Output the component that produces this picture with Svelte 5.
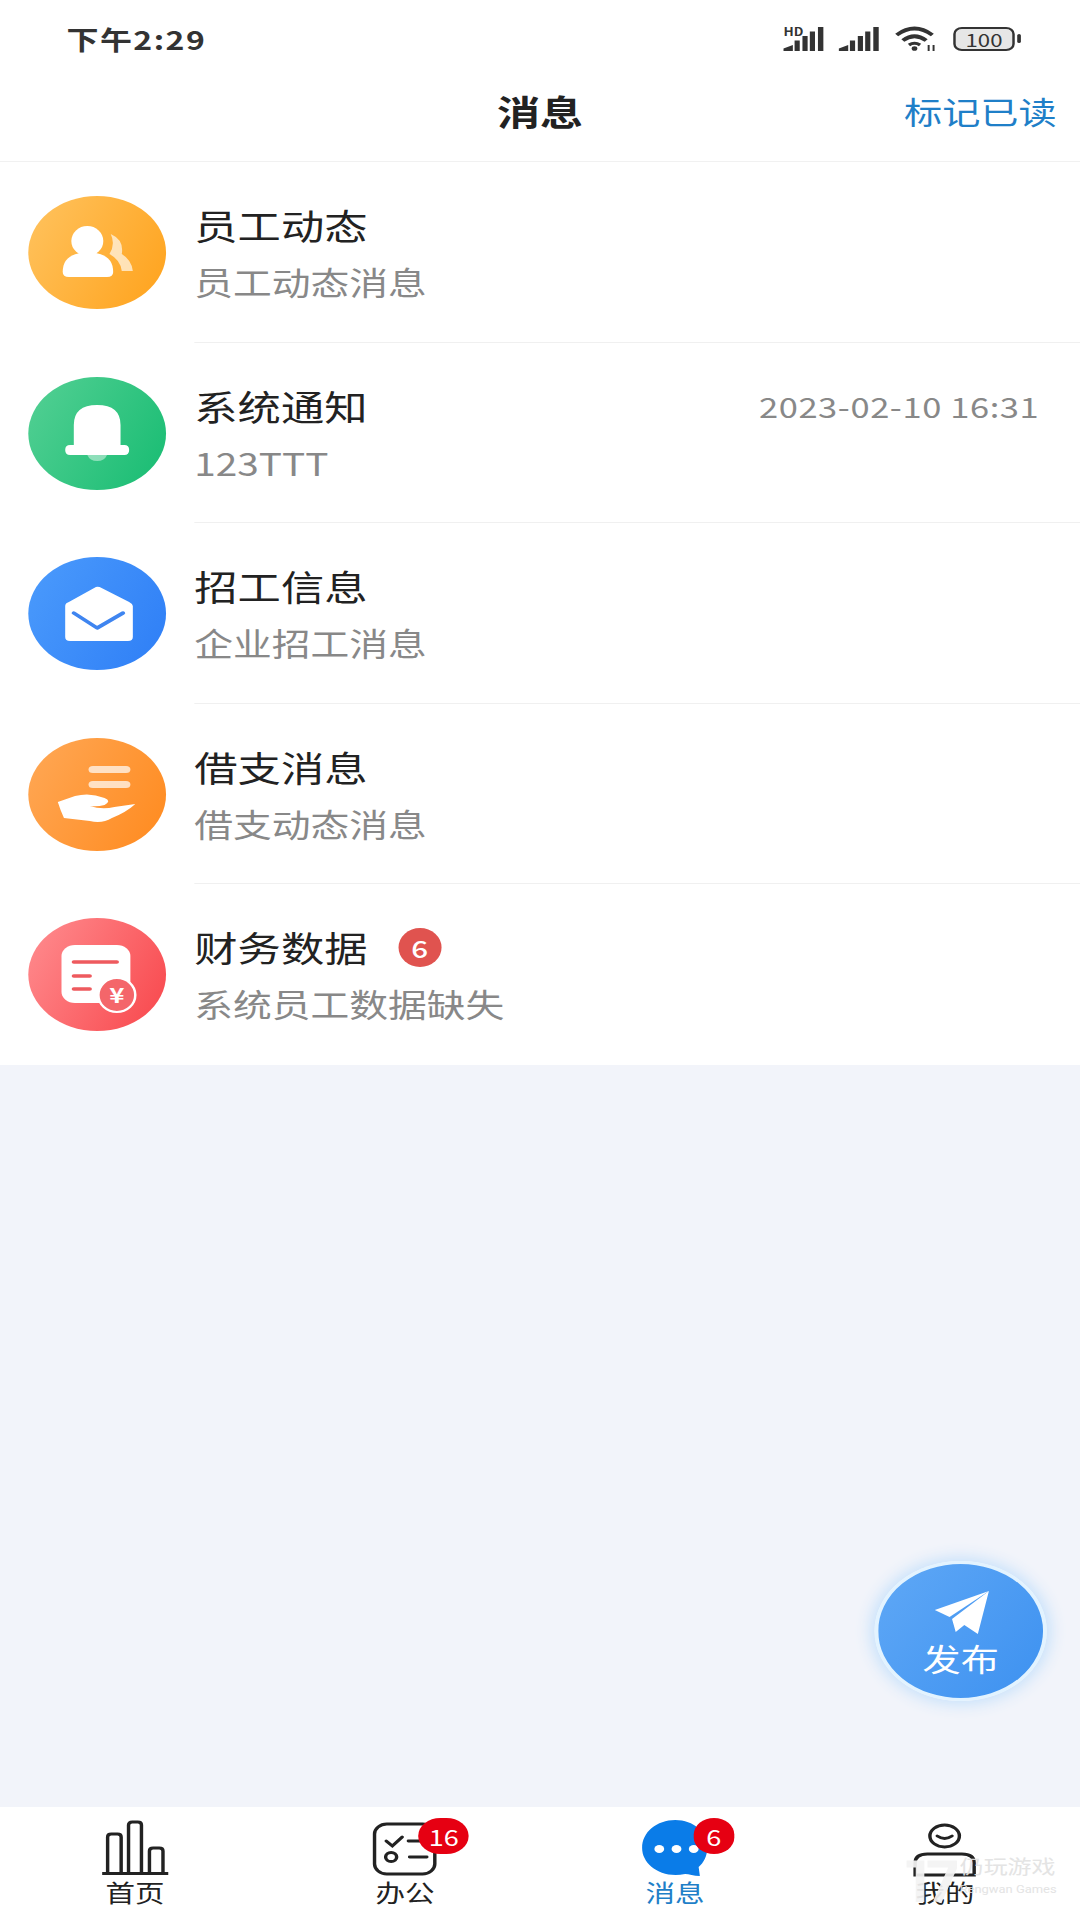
<script>
  const rows = [
    { icon: 'people', title: '员工动态', sub: '员工动态消息' },
    { icon: 'bell', title: '系统通知', sub: '123TTT', time: '2023-02-10 16:31' },
    { icon: 'mail', title: '招工信息', sub: '企业招工消息' },
    { icon: 'hand', title: '借支消息', sub: '借支动态消息' },
    { icon: 'money', title: '财务数据', sub: '系统员工数据缺失', badge: 6 }
  ];
</script>

<div class="page">
  <div class="status">
    <span class="clock">下午2:29</span>
    <div class="status-icons">
      <svg class="sig1" viewBox="0 0 34 24">
        <text x="0" y="9" class="hd">HD</text>
        <path d="M0 24v-2.500l7.600-3.500v6zM9 24v-10.500h4.200v10.500zM15.400 24v-15h4.200v15zM21.400 24v-19.500h4.200v19.500zM28 24v-24h4.400v24z" fill="#333" />
      </svg>
      <svg class="sig2" viewBox="0 0 33 24">
        <path d="M0 24v-2.500l7.600-3.500v6zM9 24v-10.500h4.200v10.500zM15.400 24v-15h4.200v15zM21.400 24v-19.500h4.200v19.500zM28 24v-24h4.400v24z" fill="#333" />
      </svg>
      <svg class="wifi" viewBox="0 0 36 25" fill="none" stroke="#333" stroke-width="3.600">
        <path d="M1 9Q15.500 -4 30 9" />
        <path d="M6 14.500Q15.500 6 25 14.500" />
        <path d="M11 19Q15.500 15.500 20 19" stroke-width="3" />
        <circle cx="15.500" cy="22.500" r="2.300" fill="#333" stroke="none" />
        <path d="M27 19v6M31 19v6" stroke-width="1.600" />
      </svg>
      <div class="battery"><span>100</span></div>
      <div class="nub"></div>
    </div>
  </div>

  <header class="nav">
    <h1>消息</h1>
    <a class="mark" href="#read">标记已读</a>
  </header>

  <ul class="list">
    {#each rows as row}
      <li class="row">
        <div class="avatar {row.icon}">
          <svg viewBox="0 0 112 113">
            {#if row.icon === 'people'}
              <path d="M67 38Q78 44 76 58Q84 64 85 75H76Q75 64 66 58Q71 48 67 38Z" fill="#fff" opacity=".65" />
              <ellipse cx="48" cy="45" rx="13" ry="15" fill="#fff" />
              <path d="M28 76Q28 60 42 57H55Q69 60 69 76Q69 81 64 81H33Q28 81 28 76Z" fill="#fff" />
            {:else if row.icon === 'bell'}
              <path d="M37 68V48Q37 28 56 28Q75 28 75 48V68H78Q82 68 82 73Q82 78 78 78H34Q30 78 30 73Q30 68 34 68Z" fill="#fff" />
              <path d="M48 78H64Q62 84 56 84Q50 84 48 78Z" fill="#fff" opacity=".45" />
            {:else if row.icon === 'mail'}
              <path d="M30 49Q30 46 33 45L55 30Q56 29.500 58 30L82 45Q85 47 85 49V80Q85 84 81 84H34Q30 84 30 80Z" fill="#fff" />
              <path d="M37 56L56 71L77 56" fill="none" stroke="#3f85f0" stroke-width="3.500" stroke-linecap="round" stroke-linejoin="round" />
            {:else if row.icon === 'hand'}
              <rect x="49" y="28" width="34" height="7" rx="3.500" fill="#fff" opacity=".7" />
              <rect x="49" y="43" width="34" height="7" rx="3.500" fill="#fff" opacity=".7" />
              <path d="M24 64L38 58Q50 54 62 60Q68 63 62 67Q56 69 50 68Q60 72 70 69L87 66Q80 74 68 80Q60 86 50 83L29 80Q26 72 24 64Z" fill="#fff" />
            {:else}
              <rect x="27" y="27" width="56" height="58" rx="11" fill="#fff" />
              <path d="M37 44H72M37 58H50M37 71H50" stroke="#ee5a5e" stroke-width="3.500" stroke-linecap="round" />
              <ellipse cx="72" cy="77" rx="15" ry="17" fill="#f4666a" stroke="#fff" stroke-width="2" />
              <text x="72" y="85" class="yen">¥</text>
            {/if}
          </svg>
        </div>
        <div class="body">
          <div class="line">
            <span class="title">{row.title}</span>
            {#if row.badge}<span class="count">{row.badge}</span>{/if}
            {#if row.time}<span class="time">{row.time}</span>{/if}
          </div>
          <p class="sub">{row.sub}</p>
        </div>
      </li>
    {/each}
  </ul>

  <main class="empty">
    <button class="fab">
      <svg viewBox="0 0 138 70">
        <path d="M92 27L48 46L60 53Z" fill="#fff" />
        <path d="M92 27L62 55L65 68L72 61L83 70Z" fill="#fff" />
      </svg>
      <span>发布</span>
    </button>
  </main>

  <nav class="tabs">
    <div class="tab">
      <div class="tab-icon">
        <svg viewBox="0 0 54 57" fill="none" stroke="#222" stroke-width="2.800">
          <path d="M0 53.500H54" stroke-width="3" />
          <path d="M4.500 53V17Q4.500 14 7.500 14H12.500Q15.500 14 15.500 17V53" />
          <path d="M21.500 53V5Q21.500 2 24.500 2H29Q32 2 32 5V53" />
          <path d="M38.500 53V31Q38.500 28 41.500 28H46.500Q49.500 28 49.500 31V53" />
        </svg>
      </div>
      <span>首页</span>
    </div>
    <div class="tab">
      <div class="tab-icon">
        <svg viewBox="0 0 52 57" fill="none" stroke="#222" stroke-width="2.800">
          <rect x="1.500" y="4" width="49" height="50" rx="10" />
          <path d="M11 21L16 26L24 17M29 21H42M30 37H44" stroke-linecap="round" />
          <circle cx="15" cy="37" r="4.500" />
        </svg>
        <span class="pill office">16</span>
      </div>
      <span>办公</span>
    </div>
    <div class="tab active">
      <div class="tab-icon">
        <svg viewBox="0 0 54 57">
          <path d="M27 0C42 0 53 12 53 28C53 36 50 43 46 47L47 56C42 56 38 54 35 54C15 59 0 44 0 28C0 12 12 0 27 0Z" fill="#0a7ce8" />
          <circle cx="14" cy="29" r="4" fill="#fff" />
          <circle cx="28" cy="29" r="4" fill="#fff" />
          <circle cx="42" cy="29" r="4" fill="#fff" />
        </svg>
        <span class="pill chat">6</span>
      </div>
      <span>消息</span>
    </div>
    <div class="tab">
      <div class="tab-icon">
        <svg viewBox="0 0 52 57" fill="none" stroke="#222" stroke-width="2.800">
          <ellipse cx="26" cy="16" rx="12" ry="11" />
          <path d="M20 16Q26 21 32 16" stroke-linecap="round" />
          <path d="M2 55V43Q2 34 12 34H40Q50 34 50 43V55Z" />
        </svg>
      </div>
      <span>我的</span>
    </div>
    <div class="watermark">
      <svg viewBox="0 0 44 50" fill="none" stroke="#f4f4f4" stroke-width="7">
        <path d="M3 10H14V48M20 10H42L28 48" />
      </svg>
      <div class="wm-text">
        <strong>仍玩游戏</strong>
        <small>Rengwan Games</small>
      </div>
    </div>
  </nav>
</div>

<style>
  :global(body) {
    margin: 0;
    overflow: hidden;
    background: #f2f4fa;
    font-family: "Noto Sans CJK SC", "Noto Sans", sans-serif;
  }

  /* the whole screen is stretched sideways in the source, 878 -> 1080 */
  .page {
    width: 878px;
    height: 1920px;
    display: flex;
    flex-direction: column;
    background: #f2f4fa;
    transform: scaleX(1.23);
    transform-origin: 0 0;
    position: relative;
    overflow: hidden;
  }

  .status {
    height: 64px;
    background: #fff;
    display: flex;
    justify-content: space-between;
    align-items: center;
    padding: 13px 48px 0 54px;
    box-sizing: border-box;
    flex-shrink: 0;
  }
  .clock {
    font-size: 26px;
    font-weight: 700;
    color: #333;
    line-height: 1;
    letter-spacing: 1.200px;
  }
  .status-icons {
    display: flex;
    align-items: center;
    height: 25px;
  }
  .status-icons svg { overflow: visible; }
  .sig1 { width: 34px; height: 24px; margin-right: 11px; }
  .sig2 { width: 33px; height: 24px; margin-right: 13px; }
  .wifi { width: 36px; height: 25px; margin-right: 11px; }
  .hd { font-size: 11px; font-weight: 700; fill: #333; }
  .battery {
    width: 50px;
    height: 24px;
    box-sizing: border-box;
    border: 2.500px solid #333;
    border-radius: 7px;
    background: #e6e6e6;
    display: flex;
    align-items: center;
    justify-content: center;
    font-size: 18px;
    color: #333;
    line-height: 1;
  }
  .nub {
    width: 3px;
    height: 9px;
    margin-left: 2px;
    border-radius: 2px;
    background: #333;
  }

  .nav {
    height: 98px;
    background: #fff;
    border-bottom: 1px solid #f1f1f1;
    display: flex;
    align-items: center;
    justify-content: center;
    position: relative;
    flex-shrink: 0;
    box-sizing: border-box;
    padding-bottom: 4px;
  }
  h1 {
    margin: 0;
    font-size: 35px;
    font-weight: 700;
    color: #222;
    line-height: 1;
  }
  .mark {
    position: absolute;
    right: 19px;
    top: 31px;
    font-size: 31px;
    color: #1f7fc8;
    line-height: 1;
    text-decoration: none;
  }

  .list {
    margin: 0;
    padding: 0;
    list-style: none;
    background: #fff;
    flex-shrink: 0;
  }
  .row {
    height: 180.500px;
    display: flex;
    align-items: center;
    padding-left: 23px;
  }
  .avatar {
    width: 112px;
    height: 113px;
    border-radius: 50%;
    flex-shrink: 0;
    margin-right: 23px;
    margin-top: 1px;
  }
  .avatar svg { display: block; width: 100%; height: 100%; }
  .people { background: linear-gradient(115deg, #ffc35f, #ffa21b); }
  .bell { background: linear-gradient(115deg, #54d094, #17bc72); }
  .mail { background: linear-gradient(115deg, #4b9bfc, #2e7ef6); }
  .hand { background: linear-gradient(115deg, #ffa856, #ff8a1e); }
  .money { background: linear-gradient(115deg, #ff8d90, #f8464b); }
  .yen { font-size: 21px; font-weight: 700; fill: #fff; text-anchor: middle; }

  .body {
    flex: 1;
    height: 100%;
    box-sizing: border-box;
    border-bottom: 1px solid #f0f0f0;
    padding-top: 45px;
  }
  .row:last-child .body { border-bottom: none; }
  .line {
    display: flex;
    align-items: center;
    height: 36px;
    padding-right: 27px;
  }
  .title {
    font-size: 35.200px;
    color: #222;
    line-height: 36px;
  }
  .count {
    width: 35px;
    height: 39px;
    margin-left: 25px;
    border-radius: 50%;
    background: #e0534f;
    color: #fff;
    font-size: 24px;
    font-weight: 500;
    line-height: 39px;
    text-align: center;
  }
  .time {
    margin-left: auto;
    margin-right: 6px;
    font-size: 28px;
    color: #888;
    letter-spacing: 0.500px;
  }
  .sub {
    margin: 20px 0 0;
    font-size: 31.500px;
    color: #888;
    line-height: 36px;
  }

  .empty {
    flex: 1;
    position: relative;
  }
  .fab {
    position: absolute;
    right: 27px;
    top: 496px;
    width: 140px;
    height: 140px;
    padding: 0;
    box-sizing: border-box;
    border: 3px solid #e2f3ff;
    border-radius: 50%;
    background: linear-gradient(125deg, #5fa8f6, #3d91f0);
    box-shadow: 0 0 14px 3px #c4e0fb;
    color: #fff;
    font: inherit;
  }
  .fab svg {
    position: absolute;
    left: -2px;
    top: 0;
    width: 138px;
    height: 70px;
  }
  .fab span {
    position: absolute;
    left: 0;
    right: 0;
    top: 76px;
    font-size: 31px;
    line-height: 36px;
    text-align: center;
  }

  .tabs {
    height: 113px;
    background: #fff;
    display: flex;
    flex-shrink: 0;
    position: relative;
    overflow: hidden;
  }
  .tab {
    flex: 1;
    display: flex;
    flex-direction: column;
    align-items: center;
    padding-top: 13px;
    font-size: 24px;
    line-height: 27px;
    color: #222;
  }
  .tab.active { color: #1f7fc8; }
  .tab-icon {
    position: relative;
    width: 54px;
    height: 57px;
    margin-bottom: 1px;
  }
  .tab-icon svg { display: block; width: 100%; height: 100%; }
  .pill {
    position: absolute;
    top: -2px;
    height: 36px;
    border-radius: 18px;
    background: #e60012;
    color: #fff;
    font-size: 22px;
    line-height: 36px;
    text-align: center;
  }
  .office { left: 38px; width: 41px; }
  .chat { left: 42px; width: 33px; }

  .watermark {
    position: absolute;
    right: 19px;
    top: 47px;
    display: flex;
    align-items: flex-start;
    color: #e2e2e2;
    opacity: 0.92;
  }
  .watermark svg { width: 44px; height: 50px; }
  .wm-text {
    display: flex;
    flex-direction: column;
    padding-left: 2px;
  }
  .wm-text strong {
    font-size: 19.500px;
    font-weight: 400;
    line-height: 24px;
  }
  .wm-text small {
    font-size: 10.500px;
    line-height: 16px;
    margin-top: 4px;
    font-family: Roboto, sans-serif;
  }
</style>
